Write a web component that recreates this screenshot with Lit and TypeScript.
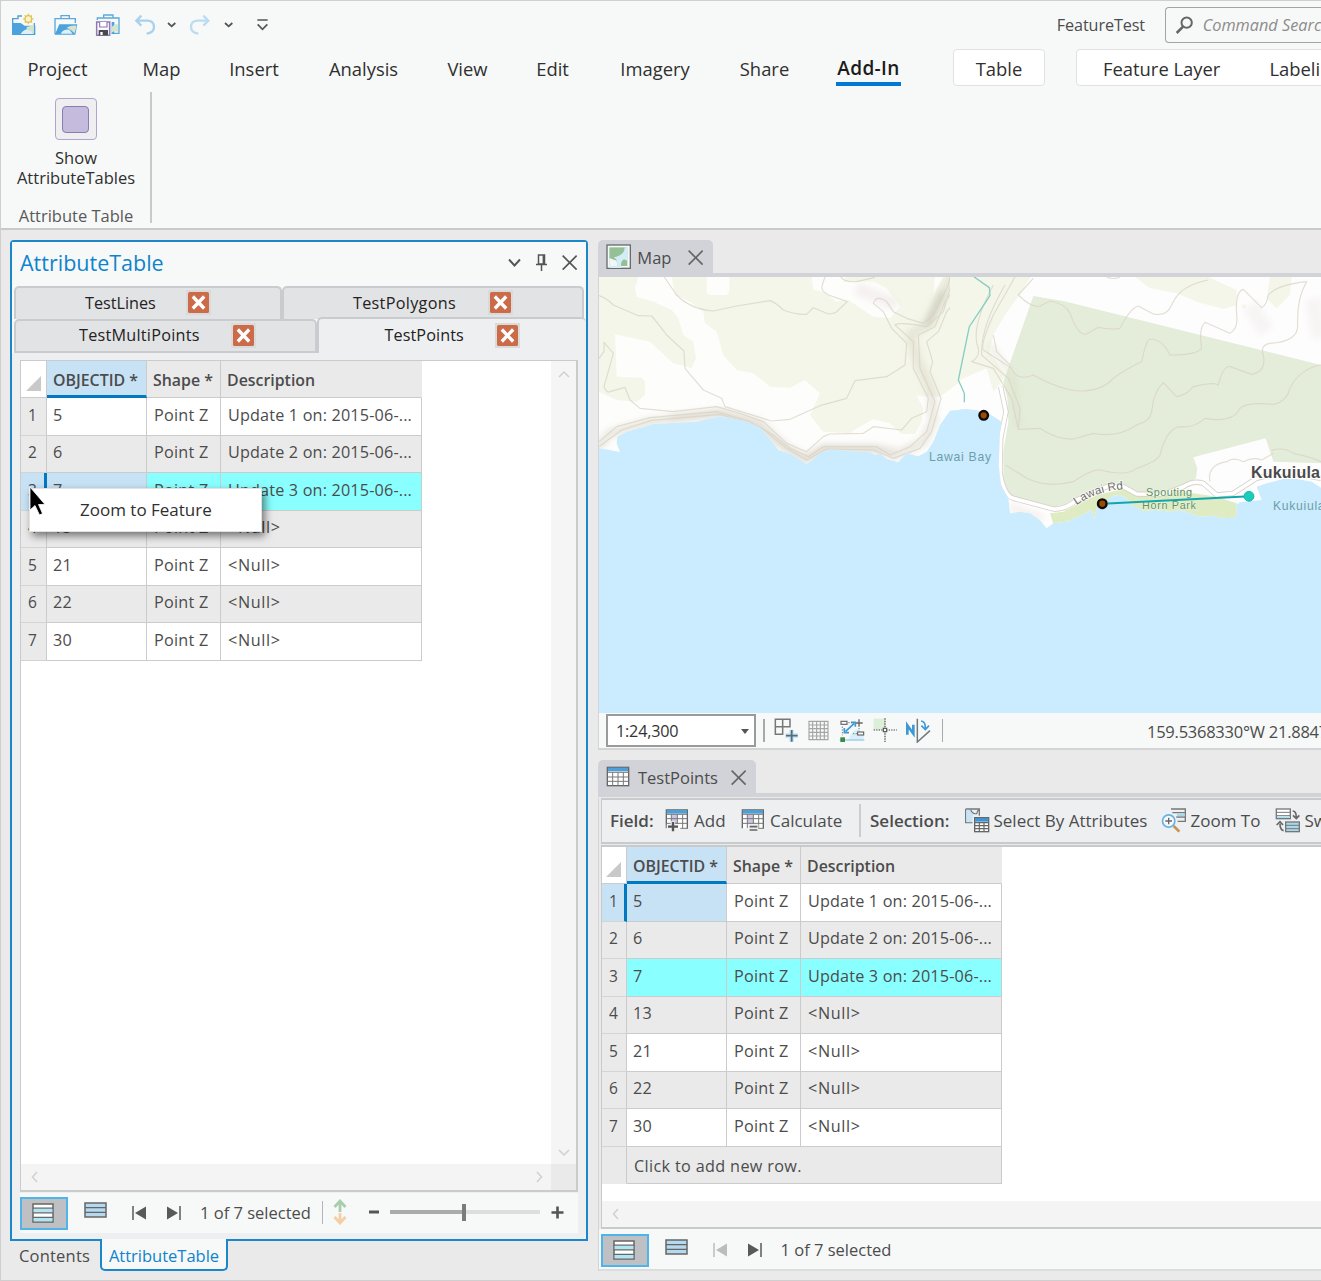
import { LitElement, html, svg, css, nothing } from "lit";
import { customElement, property } from "lit/decorators.js";

type Row = { id: string; text: string };

const ROWS: Row[] = [
  { id: "5", text: "Update 1 on: 2015-06-..." },
  { id: "6", text: "Update 2 on: 2015-06-..." },
  { id: "7", text: "Update 3 on: 2015-06-..." },
  { id: "13", text: "<Null>" },
  { id: "21", text: "<Null>" },
  { id: "22", text: "<Null>" },
  { id: "30", text: "<Null>" },
];

const MENU = ["Project", "Map", "Insert", "Analysis", "View", "Edit", "Imagery", "Share", "Add-In"];

/* Icons are drawn on a grid of three units per pixel. */
const icon = (x: number, y: number, w: number, h: number, body: unknown) =>
  html`<svg class="ico" width=${w / 3} height=${h / 3} viewBox="${x} ${y} ${w} ${h}">${body}</svg>`;

const newProject = icon(36, 36, 72, 72, svg`
  <path d="M38 66V53H54V45H66" fill="none" stroke="#4f9fd6" stroke-width="4"/>
  <path d="M36 66H62L74 74H106V102H36Z" fill="#4ba2dc"/>
  <path d="M103 66V100" stroke="#4ba2dc" stroke-width="4"/>
  <path d="M62 99Q72 82 92 84L101 99Z" fill="#dff0f8"/><path d="M80 78L102 72V98Q94 88 80 86Z" fill="#cfe3cf"/>
  <g stroke="#e3c14a" stroke-width="3.5"><path d="M85 38V70M69 54H101M74 43L96 65M96 43L74 65"/></g>
  <circle cx="85" cy="54" r="10" fill="#fbf3cf" stroke="#e3c14a" stroke-width="4"/>`);
const openProject = icon(162, 36, 74, 72, svg`
  <path d="M165 100V53H226V66M183 53V44H208V53" fill="none" stroke="#5ba9dc" stroke-width="4"/>
  <path d="M165 100L178 70H232L226 101H165Z" fill="#4ba2dc"/>
  <path d="M182 98Q190 84 208 86L218 98Z" fill="#dff0f8"/><path d="M200 80Q212 72 230 74L224 97Q214 86 200 80Z" fill="#d3e5d0"/>`);
const saveProject = icon(288, 36, 76, 76, svg`
  <path d="M295 60V54H360V100H338M314 54V45H342V54" fill="none" stroke="#5ba9dc" stroke-width="4"/>
  <path d="M338 66H346V102H338Z" fill="#4ba2dc"/><path d="M338 82Q350 68 357 74V96Q346 90 338 98Z" fill="#d3e5d0"/>
  <path d="M293 66H332V106H293Z" fill="#fbfbfd" stroke="#8f77b8" stroke-width="4.500"/><path d="M302 66V81H324V66" fill="#fff" stroke="#8f77b8" stroke-width="3.500"/>
  <rect x="299" y="90" width="28" height="16" fill="#4a4a4a"/><rect x="304" y="96" width="7" height="9" fill="#fff"/>`);
const undo = icon(406, 42, 66, 66, svg`<path d="M428 47L413 62L428 77M414 62H448Q466 64 466 81Q466 98 444 101" fill="none" stroke="#a9d1ec" stroke-width="7"/>`);
const redo = icon(571, 42, 66, 66, svg`<path d="M614 47L629 62L614 77M628 62H595Q577 64 577 81Q577 98 599 101" fill="none" stroke="#bcdcf0" stroke-width="7"/>`);
const caret = icon(508, 64, 28, 24, svg`<path d="M511 70L522 80L533 70" fill="none" stroke="#555" stroke-width="5.5"/>`);
const customize = icon(772, 56, 40, 44, svg`<path d="M776 62H807M777 75L791.5 90L806 75" fill="none" stroke="#555" stroke-width="5"/>`);
const search = icon(884, 48, 56, 58, svg`<circle cx="919" cy="71" r="15.500" fill="none" stroke="#666" stroke-width="6"/><path d="M908 83L889 102" stroke="#666" stroke-width="8"/>`);
const cross = (c = "#666", s = 46) => html`<svg class="ico" width=${s / 3} height=${s / 3} viewBox="0 0 46 46"><path d="M2 2L44 44M44 2L2 44" stroke=${c} stroke-width="5"/></svg>`;
const closeBox = html`<span class="close"><svg width="21" height="21" viewBox="0 0 21 21"><rect width="21" height="21" rx="1.500" fill="#cc6b48"/><path d="M4.800 4.500L16.200 16.500M16.200 4.500L4.800 16.500" stroke="#fff" stroke-width="3.300"/></svg></span>`;
const mapIcon = icon(48, 28, 76, 76, svg`<rect x="51" y="31" width="70" height="70" fill="#f6fafb" stroke="#6b6b6b" stroke-width="4"/><path d="M58 38H112V94H58Z" fill="#93c195"/><path d="M112 38H104Q104 54 92 60Q82 66 72 68L80 76L82 94H58V100H94Q90 80 102 74L112 78Z" fill="#d2edf8"/><path d="M58 70L80 78L82 94H58Z" fill="#f1f7f4"/>`);
const tableIcon = icon(48, 200, 72, 64, svg`<rect x="52" y="204" width="64" height="55" fill="#fff" stroke="#666" stroke-width="4"/><rect x="54" y="205" width="60" height="11" fill="#4e9fd8"/><path d="M52 219H116M52 233H116M52 246H116M68 219V259M84 219V259M100 219V259" stroke="#777" stroke-width="3"/>`);

const fieldTable = svg`<path d="M228 391V336H291V391" fill="#fff" stroke="#666" stroke-width="4"/><rect x="229" y="336" width="61" height="11" fill="#4e9fd8"/><rect x="244" y="350" width="17" height="26" fill="#cdc5e2"/><path d="M228 349H291M228 362H291M228 376H291M243 349V390M261 349V378M277 349V391M270 391H293" stroke="#777" stroke-width="3"/>`;
const addField = icon(224, 330, 72, 72, svg`${fieldTable}<path d="M229 386H265M247 370V402" stroke="#edeff1" stroke-width="13"/><path d="M233 386H263M248 372V400" stroke="#555" stroke-width="7"/>`);
const calcField = icon(224, 330, 72, 72, svg`${fieldTable}<rect x="246" y="378" width="30" height="24" fill="#edeff1"/><path d="M250 386H273M250 396H273" stroke="#666" stroke-width="5"/>`);
const selectAttr = icon(42, 324, 78, 78, svg`<path d="M47 330H88V352M47 330V371H68" fill="#e2f1fa" stroke="#777" stroke-width="4"/><path d="M49 332L65 334L70 350L66 370H49Z" fill="#c7e4f5"/><path d="M62 332Q68 346 80 344Q82 334 88 332" fill="none" stroke="#777" stroke-width="3.500"/><rect x="68" y="350" width="52" height="52" fill="#edeff1"/><rect x="74" y="356" width="42" height="42" fill="#fff" stroke="#666" stroke-width="4"/><rect x="75" y="357" width="40" height="11" fill="#3f93d1"/><path d="M74 371H116M74 380H116M74 389H116M88 370V398M102 370V398" stroke="#666" stroke-width="3.500"/>`);
const zoomTo = icon(632, 324, 78, 80, svg`<path d="M662 330H705V367H682M666 341H705M678 354H705" fill="none" stroke="#777" stroke-width="4"/><rect x="680" y="344" width="23" height="8" fill="#a8d8ea"/><circle cx="655" cy="366" r="18.500" fill="#f4f9fd" stroke="#6ab1e2" stroke-width="5"/><path d="M645 366H665M655 356V376" stroke="#666" stroke-width="4"/><path d="M670 381L687 398" stroke="#c69355" stroke-width="8"/>`);
const switchSel = icon(974, 324, 78, 80, svg`<rect x="978" y="330" width="42" height="29" fill="#fff" stroke="#777" stroke-width="4"/><path d="M978 340H1020M978 350H1020" stroke="#777" stroke-width="3"/><rect x="980" y="352" width="38" height="5" fill="#a8e0f0"/><rect x="1006" y="369" width="41" height="29" fill="#a8d8ea" stroke="#777" stroke-width="4"/><path d="M1006 379H1047M1006 389H1047" stroke="#777" stroke-width="3"/><path d="M1027 336Q1038 336 1038 356M1028 349L1038 359L1047 349M1000 395Q989 393 989 374M979 378L989 368L998 378" fill="none" stroke="#666" stroke-width="5"/>`);

const gridAdd = icon(552, 56, 76, 74, svg`<path d="M556 60H600V82H556ZM556 82V105H578V60M578 105V82" fill="none" stroke="#777" stroke-width="4.500"/><path d="M586 109H624M605 91V128" stroke="#c9e6f8" stroke-width="14"/><path d="M588 109H623M605 92V127" stroke="#5a6b78" stroke-width="5.500"/>`);
const gridIcon = icon(655, 60, 64, 64, svg`<path d="M658 64H715V119H658ZM658 75H715M658 86H715M658 97H715M658 108H715M669 64V119M681 64V119M692 64V119M704 64V119" fill="none" stroke="#a5a5a5" stroke-width="3.500"/>`);
const snapping = icon(748, 58, 80, 74, svg`<path d="M776 126Q784 98 802 92L822 104V126Z" fill="#d7effb"/><path d="M750 124H824" stroke="#9fcbe6" stroke-width="4"/><rect x="754" y="68" width="18" height="9" fill="#fff" stroke="#666" stroke-width="3.500"/><rect x="804" y="100" width="18" height="9" fill="#fff" stroke="#666" stroke-width="3.500"/><path d="M797 73H819M808 62V84" stroke="#666" stroke-width="4"/><path d="M768 98L793 75M764 88V102H778M784 71H797V84" fill="none" stroke="#3d98d6" stroke-width="5"/><path d="M776 72H790M758 84V110M808 88V98M790 105H802" stroke="#777" stroke-width="3" stroke-dasharray="4 4"/><rect x="752" y="116" width="14" height="14" fill="#3b8a45"/>`);
const dynCons = icon(848, 56, 74, 74, svg`<rect x="850" y="58" width="34" height="34" fill="#dcefd8"/><path d="M850 92H920M884 57V128" stroke="#444" stroke-width="3.500" stroke-dasharray="4 3.500"/><rect x="879" y="87" width="10" height="10" fill="#fff" stroke="#555" stroke-width="3.500"/>`);
const north = icon(946, 56, 80, 76, svg`<path d="M953 106V78L971 103V76" fill="none" stroke="#3d98d6" stroke-width="8"/><path d="M983 58V128L1021 94" fill="none" stroke="#777" stroke-width="4.500"/><path d="M994 65Q1008 66 1007 88M995 79L1007 91L1018 79" fill="none" stroke="#3d98d6" stroke-width="5"/>`);

const allRows = html`<svg class="ico" width="22" height="20" viewBox="0 0 22 20"><rect x="1" y="1" width="20" height="18" fill="#fff" stroke="#666" stroke-width="1.500"/><path d="M1.700 7.700H20.300M1.700 16.500H20.300" stroke="#aee6f6" stroke-width="3.400"/><path d="M1 5.200H21M1 9.800H21M1 14.300H21" stroke="#666" stroke-width="1.300"/></svg>`;
const selRows = html`<svg class="ico" width="23" height="16" viewBox="0 0 23 16"><rect x="1" y="1" width="21" height="14" fill="#b5d9ee" stroke="#666" stroke-width="1.500"/><path d="M1 5.700H22M1 10.300H22" stroke="#666" stroke-width="1.300"/></svg>`;
const toFirst = (c: string) => html`<svg class="ico" width="15" height="14" viewBox="0 0 15 14"><path d="M1 0V14" stroke=${c} stroke-width="1.500"/><path d="M14 .5V13.500L3 7Z" fill=${c}/></svg>`;
const toNext = html`<svg class="ico" width="15" height="14" viewBox="0 0 15 14"><path d="M14 0V14" stroke="#58595b" stroke-width="1.500"/><path d="M1 .5V13.500L12 7Z" fill="#58595b"/></svg>`;
const chevron = (d: string) => html`<svg class="ico" width="12" height="12" viewBox="0 0 12 12"><path d=${d} fill="none" stroke="#d0d0d0" stroke-width="1.500"/></svg>`;
const UP = "M1 8L6 3L11 8", DOWN = "M1 4L6 9L11 4", LEFT = "M8 1L3.500 6L8 11", RIGHT = "M4 1L8.500 6L4 11";

const base = css`
  * { box-sizing: border-box; }
  :host { display: block; font-family: "Open Sans", "Noto Sans", sans-serif; font-size: 16.500px; color: #4c4c4c; white-space: nowrap; }
  .ico { display: block; flex: none; }
`;

@customElement("data-grid")
export class DataGrid extends LitElement {
  @property({ type: Number }) current = 0;
  @property({ type: Boolean }) addRow = false;
  static styles = [base, css`
    .grid { display: grid; grid-template-columns: 26px 100px 74px 201px; width: 401px; font-size: 16.200px; letter-spacing: 0.250px; }
    .grid.slim { grid-template-columns: 25px 100px 74px 201px; width: 400px; }
    .h, .c { display: flex; align-items: center; border-right: 1px solid #cbcbcb; border-bottom: 1px solid #cbcbcb; padding-left: 7px; }
    .h { height: 37px; background: #eaeaea; font-weight: 600; font-size: 15.900px; padding: 1px 0 0 6px; letter-spacing: 0; }
    .h.last { border-right-color: #eaeaea; }
    .h.id { background: #c7e2f5; border-bottom: 3px solid #0079c1; padding-top: 3px; }
    .h.corner { background: #fff; align-items: flex-end; justify-content: flex-end; padding: 0 5px 6px 0; }
    .tri { width: 15px; height: 15px; background: #c9c9c9; clip-path: polygon(100% 0, 100% 100%, 0 100%); }
    .c { height: 37.500px; background: #fff; padding-bottom: 3px; }
    .c.i { padding-left: 6px; }
    .c.n { background: #eaeaea; padding-left: 7px; font-size: 15.500px; border-bottom-color: #d4d4d4; }
    .c.alt { background: #eaeaea; }
    .c.sel { background: #8affff; }
    .c.cur { background: #c7e2f5; }
    .c.mark { background: #c7e2f5; border-right: 3px solid #0079c1; }
    .c.add { grid-column: 2 / 5; padding: 2px 0 0 7px; letter-spacing: 0.350px; }
    .c.blank { border-bottom-color: #eaeaea; }
    .c.d { letter-spacing: 0.170px; }
    .c.null { letter-spacing: 0.650px; }
  `];
  render() {
    return html`<div class="grid ${this.addRow ? "slim" : ""}">
      <div class="h corner"><div class="tri"></div></div>
      <div class="h id">OBJECTID *</div><div class="h">Shape *</div><div class="h last">Description</div>
      ${ROWS.map((r, i) => {
        const tone = i === 2 ? "sel" : i % 2 ? "alt" : "";
        const here = i === this.current;
        return html`
          <div class="c n ${here ? "mark" : ""}">${i + 1}</div>
          <div class="c i ${here ? "cur" : tone}">${r.id}</div>
          <div class="c ${tone}">Point Z</div>
          <div class="c ${r.text === "<Null>" ? "null" : "d"} ${tone}">${r.text}</div>`;
      })}
      ${this.addRow ? html`<div class="c n blank"></div><div class="c alt add">Click to add new row.</div>` : nothing}
    </div>`;
  }
}

@customElement("grid-footer")
export class GridFooter extends LitElement {
  @property({ type: Boolean }) zoom = false;
  static styles = [base, css`
    .bar { display: flex; height: 33px; align-items: center; }
    .on { width: 48px; height: 33px; border: 2px solid #4fb4ea; background: #bfc0c4; display: grid; place-items: center; padding: 0 2px 1px 0; }
    .second { margin: -8px 0 0 16px; }
    .first { margin: -2px 0 0 25px; }
    .next { margin: -2px 0 0 19px; }
    .text { margin: -2px 0 0 19px; width: 112px; }
    .sep { width: 1px; height: 23px; background: #b5b5b5; margin: -3px 10px 0; }
    .arrows, .minus, .plus { margin-top: -3px; }
    .slider { display: flex; align-items: center; width: 150px; margin: -3px 11px 0 11px; }
    .done { width: 72px; height: 4px; background: #ababab; }
    .thumb { width: 4px; height: 17px; background: #7b7b7b; }
    .rest { flex: 1; height: 4px; background: #dedede; }
  `];
  render() {
    return html`<div class="bar">
      <div class="on">${allRows}</div><div class="second">${selRows}</div>
      <div class="first">${toFirst(this.zoom ? "#58595b" : "#bbbcbe")}</div><div class="next">${toNext}</div>
      <div class="text">1 of 7 selected</div>
      ${this.zoom ? html`<div class="sep"></div>
        <svg class="ico arrows" width="14" height="26" viewBox="0 0 14 26"><path d="M7 13V3M1.500 8L7 2L12.500 8" fill="none" stroke="#a9ceae" stroke-width="2.800"/><path d="M7 14V23M1.500 18L7 24L12.500 18" fill="none" stroke="#f3cfa5" stroke-width="2.800"/></svg>
        <svg class="ico minus" width="32" height="12" viewBox="0 0 32 12"><path d="M22 6H32" stroke="#555" stroke-width="3"/></svg>
        <div class="slider"><div class="done"></div><div class="thumb"></div><div class="rest"></div></div>
        <svg class="ico plus" width="13" height="13" viewBox="0 0 13 13"><path d="M0.500 6.500H12.500M6.500 .5V12.500" stroke="#555" stroke-width="2.600"/></svg>` : nothing}
    </div>`;
  }
}

@customElement("map-view")
export class MapView extends LitElement {
  static styles = css`
    :host { display: block; }
    svg { display: block; }
    text { font-family: "Liberation Sans", Arial, sans-serif; }
    .contour { fill: none; stroke: #d8d2c4; stroke-width: 3.500; stroke-linejoin: round; opacity: 0.7; }
    .veg { fill: #f3f6e8; }
  `;
  render() {
    return html`<svg width="722" height="436" viewBox="599 277 722 436">
      <defs>
        <filter id="soft" filterUnits="userSpaceOnUse" x="-50" y="0" width="1300" height="850"><feGaussianBlur stdDeviation="9"/></filter>
        <clipPath id="west"><path d="M27 100V640L60 645L90 652L80 625L82 605L110 590L190 567L260 563L320 560L350 552L385 545L420 548L470 560L510 577L530 600L565 645L605 658L650 687L670 672L690 655L720 643L780 648L840 652L855 660L870 655L890 672L925 682L950 655L985 664L1010 650L1030 620L1050 570L1080 527L1110 524V100Z"/></clipPath>
        <clipPath id="east"><path d="M0 30V434L50 432L80 436L115 445L155 470L150 500L146 600L153 660L175 700L180 745L210 740L240 745L270 765L290 790L310 775L350 770L400 748L425 735L432 762L440 730L460 722L470 705L490 692L510 690L530 700L545 720L580 738L620 735L660 740L690 735L720 745L750 755L790 752L820 760L850 758L862 745L858 720L870 712L935 705L920 665L950 655L1000 642L1040 642L1085 650L1113 668V30Z"/></clipPath>
        <path id="rd" d="M380 721Q440 677 530 672"/>
      </defs>
      <rect x="599" y="277" width="722" height="436" fill="#cbebff"/>
      <g transform="translate(590 235) scale(.33333)"><g clip-path="url(#west)">
        <rect x="20" y="100" width="1100" height="600" fill="#fdfdfc"/>
        <path class="veg" d="M27 125H145L135 160L140 185L190 200L245 225L265 250L280 300L310 320L318 370L305 400L250 385L180 320L75 298L80 425L155 428L165 440V480L140 500L80 495L27 470Z"/>
        <path class="veg" d="M245 125H350V175L360 180L410 180L418 170V125H665L670 165L700 170L740 200L775 195L850 245L900 250L930 215L890 160L850 140L760 140L770 125H1035L1030 180L1060 125H1110V440L1050 485L980 483L1000 520L995 560L975 597L935 597L900 565L850 553L800 580L780 595L700 590L660 540L690 475L645 435L600 458L540 455L490 415L440 405L400 360L380 290L345 265L340 230L300 200L255 180Z"/>
        <g fill="none" filter="url(#soft)">
          <path d="M1090 120L1050 190L1015 265L960 300L985 380L1025 470L1030 560L1000 620L930 655L860 640L700 640L650 675L590 640L510 565L385 535L180 560L60 595L20 640" stroke="#ddd8cb" stroke-width="26" opacity=".6"/>
          <path d="M1060 170L1010 272" stroke="#c3c2ae" stroke-width="22" opacity=".55"/>
          <path d="M240 548L400 532L500 568L560 625L650 668L700 640L860 645L920 672" stroke="#b5aa98" stroke-width="9" opacity=".4"/>
          <path d="M800 160L920 210" stroke="#f4f0ef" stroke-width="36"/>
        </g>
        <g class="contour">
          <path d="M222 125L260 180Q300 222 370 228L440 213L540 197Q560 205 580 225Q620 240 650 238L670 218L715 237Q740 235 745 225L772 200L715 180Q690 165 697 150L705 125M752 125Q760 142 800 140L855 127"/>
          <path d="M27 182Q50 190 70 210L145 242L185 243Q200 260 230 300L282 348L285 400L340 465L395 490L405 515L470 535L545 558L600 553L690 512L770 490L795 437L890 425L945 390L950 325L905 280L880 230L850 205Q860 178 890 200L910 230L950 250L1000 265L1030 240L1075 150L1080 125"/>
          <path d="M27 370L42 350V322L70 355L42 455Q50 475 60 470L105 457L120 495L150 520L250 530L380 515L450 535L520 560L590 625L650 650L700 605L720 597L820 595L850 575L935 585L965 550L1010 530L1015 490L970 400V320L915 270Q930 260 1010 275L1060 230L1090 125"/>
          <path d="M27 620L80 575L180 548L380 530L480 560L550 600L600 640L655 665L700 635L860 635L900 660L960 635L1010 590L1035 500L990 400L985 300L1035 275L1065 200L1110 140"/>
          <path d="M27 635L95 585L185 556L390 538L510 575L590 640L650 675L710 642L850 645L910 670L990 640L1025 590L1053 490L1020 410L1028 380L1010 320L1045 290L1070 230L1105 190"/>
        </g>
      </g></g>
      <g transform="translate(950 265) scale(.33333)"><g clip-path="url(#east)">
        <rect x="30" y="30" width="1100" height="770" fill="#fefdfd"/>
        <path class="veg" d="M-5 30H245L215 80L165 150L130 210L118 260L165 330L155 350L130 380L110 310L-5 360ZM555 36H775L860 75V120L820 132L740 110L680 85L600 70ZM960 36H1025L1020 90L980 130L950 100ZM876 118L890 120L886 132L876 128Z"/>
        <path d="M1090 100L1110 220M900 120L950 200" fill="none" stroke="#f7f4f4" stroke-width="50" filter="url(#soft)"/>
        <path d="M250 93L340 108L1113 300V595L970 590L947 520L730 577L742 610L738 640L690 668L570 690L520 670L470 660L400 690L330 730L220 715L175 690L160 640V560L175 470L172 400L160 350Z" fill="#e4edda"/>
        <path d="M300 745L340 740L400 708L440 690L520 672L570 690L640 690L700 680L800 695L860 715L865 770H720L500 720L440 765L400 760L310 778Z" fill="#dfebc2"/>
        <path d="M120 240L190 345L205 480" stroke="#d3d6bd" stroke-width="16" fill="none" opacity=".4" filter="url(#soft)"/>
        <path d="M180 725L280 760" stroke="#efe9e3" stroke-width="14" filter="url(#soft)"/>
        <g class="contour">
          <path d="M250 40L205 90Q245 130 270 123L300 108Q345 115 360 145Q385 215 410 207L445 187Q490 195 510 190Q540 130 565 123L610 147Q650 155 665 120Q690 60 775 45M470 36Q490 45 510 36"/>
          <path d="M195 36L130 150Q90 240 100 255L185 310Q200 350 250 330Q340 380 400 378Q460 375 490 340Q530 310 575 290Q590 220 600 223Q635 220 660 270Q740 270 755 250Q745 190 765 172L840 205Q865 190 860 150Q855 80 880 73L935 128Q950 120 955 90Q980 60 1070 50"/>
          <path d="M165 60Q90 190 95 270L175 340L210 430L205 493L270 490Q320 525 370 522L430 505Q500 520 560 480Q600 470 605 440Q610 380 640 353L680 395Q710 390 730 365Q790 350 805 360Q820 300 840 305L905 328Q950 320 940 270Q930 240 960 235Q1045 230 1043 180Q1040 100 1070 50"/>
          <path d="M130 60Q60 190 85 250Q90 275 65 290L130 310L185 400L205 493M167 600L230 640Q290 670 370 650Q430 610 450 615Q530 635 560 610Q620 590 630 570Q650 490 690 485Q730 490 765 460Q850 475 870 430Q890 410 970 418Q1010 410 1020 370Q1050 310 1113 300"/>
          <path d="M965 556Q1000 545 1030 565Q1080 575 1113 590M780 650Q770 600 830 590Q850 575 880 590Q910 575 935 585L970 565M130 210L140 260L180 300"/>
        </g>
        <g fill="none" stroke-linejoin="round">
          <path d="M152 365L168 440L152 520L150 620Q160 690 190 700L310 732Q345 735 380 705L470 665L520 665L560 687L640 688L700 665Q730 645 760 655L800 690L850 685L920 640L1000 620L1113 640" stroke="#d6d1ca" stroke-width="16"/>
          <path d="M152 365L168 440L152 520L150 620Q160 690 190 700L310 732Q345 735 380 705L470 665L520 665L560 687L640 688L700 665Q730 645 760 655L800 690L850 685L920 640L1000 620L1113 640" stroke="#fff" stroke-width="11"/>
        </g>
        <path d="M70 34L118 68L120 92L58 185L25 345L43 385V412" fill="none" stroke="#86cdc3" stroke-width="4"/>
      </g></g>
      <g font-size="12.200" fill="#6b9fa8"><text x="929" y="461" textLength="62">Lawai Bay</text><text x="1273" y="510" letter-spacing=".7">Kukuiula Bay</text></g>
      <g transform="translate(950 265) scale(.33333)"><text font-size="35" fill="#6d6b66" stroke="#fff" stroke-width="4" paint-order="stroke"><textPath href="#rd" textLength="150">Lawai Rd</textPath></text></g>
      <g font-size="10.800" fill="#5f9168" stroke="#eef5e0" stroke-width="1" paint-order="stroke"><text x="1146" y="495.500" textLength="46">Spouting</text><text x="1142" y="509" textLength="54">Horn Park</text></g>
      <text x="1251" y="477.500" font-size="16" font-weight="700" letter-spacing=".2" fill="#4b4b4b" stroke="#fff" stroke-width="2" paint-order="stroke">Kukuiula</text>
      <path d="M1108 503.500L1245 496.500" stroke="#12a6ac" stroke-width="1.900"/>
      <g fill="#9d4a00" stroke="#0b0b0b" stroke-width="2.400"><circle cx="983.700" cy="415.300" r="4.300"/><circle cx="1102.300" cy="503.700" r="4.300"/></g>
      <circle cx="1249" cy="496.300" r="4.900" fill="#19cdbd" stroke="#18b5b0"/>
    </svg>`;
  }
}

@customElement("app-root")
export class AppRoot extends LitElement {
  static styles = [base, css`
    .app { position: relative; width: 1321px; height: 1281px; overflow: hidden; background: #eaeaea; border: solid #cfcfcf; border-width: 1px 0 1px 1px; display: flex; flex-direction: column; }
    .ribbon { height: 229px; flex: none; background: #f7f9f8; border-bottom: 2px solid #c9c9cd; color: #2f2f2f; }
    .qat { display: flex; align-items: center; height: 48px; padding-left: 11px; }
    .open { margin-left: 18px; } .save { margin-left: 16.500px; } .undo { margin-left: 14px; }
    .c1 { margin-left: 11px; } .redo { margin-left: 12px; } .c2 { margin-left: 13px; } .cust { margin-left: 23px; }
    .name { margin-left: auto; margin-right: 20px; color: #4c4c4c; font-size: 16.200px; letter-spacing: -0.100px; }
    .search { width: 156px; height: 36px; border: 1.500px solid #a3a3a3; border-right: 0; border-radius: 4px 0 0 4px; display: flex; align-items: center; gap: 9px; padding-left: 9px; font-style: italic; color: #8c8c8c; overflow: hidden; font-size: 16.300px; }
    .menu { display: grid; grid-template-columns: 109px 99px 86px 133px 75px 95px 110px 109px 99px 35px 92px 31px 300px; height: 37px; margin-left: 2px; font-size: 18.400px; align-items: stretch; }
    .menu > div { display: flex; align-items: center; justify-content: center; padding-top: 1px; }
    .menu .active { font-weight: 600; color: #1c1c1c; font-size: 19px; letter-spacing: 0.400px; padding: 0; }
    .active span { display: flex; align-items: center; height: 37px; border-bottom: 4px solid #0079d6; padding: 5px 1px 0; }
    .menu .pill { background: #fff; border: 1px solid #e0e1e1; border-radius: 4px; }
    .menu .wide { justify-content: flex-start; padding-left: 26px; gap: 49px; }
    .group { width: 151px; height: 131px; margin-top: 6px; border-right: 2px solid #c9c9c9; display: flex; flex-direction: column; align-items: center; padding-top: 6px; }
    .tile { width: 42px; height: 42px; flex: none; border: 1.500px solid #b1a5cf; border-radius: 4px; background: #efeff0; display: grid; place-items: center; }
    .tile i { width: 27px; height: 27px; border: 1.500px solid #8a7db5; border-radius: 4px; background: #c4bbdd; display: block; }
    .cmd { line-height: 19.500px; text-align: center; margin-top: 8px; padding-left: 1px; }
    .gname { margin-top: 17px; color: #595959; line-height: 24px; padding-left: 1px; }
    .main { display: flex; flex: 1; padding: 10px 0 0 9px; }
    .left { width: 578px; flex: none; }
    .pane { height: 1001px; border: 2px solid #1b86c9; border-radius: 4px 4px 0 0; background: #eeeff1; display: flex; flex-direction: column; }
    .title { height: 44px; display: flex; align-items: center; padding: 0 9px 3px 8px; background: #f7f9f8; color: #0f83cd; font-size: 21.500px; }
    .title .t { flex: 1; }
    .acts { display: flex; align-items: center; gap: 14px; }
    .tabs { height: 67px; background: #f7f9f8; display: flex; flex-direction: column; }
    .trow { display: flex; height: 33px; padding-left: 2px; }
    .tab { height: 33px; background: #e2e3e5; border: 2px solid #cacbcf; border-bottom: 0; border-radius: 5px 5px 0 0; display: flex; align-items: center; color: #222; font-size: 16.200px; padding-bottom: 2px !important; }
    .close { margin-left: auto; border: 2px solid #dadada; display: block; height: 25px; }
    .close svg { display: block; }
    .a { width: 268px; padding: 0 69px 0 69px; } .b { width: 302px; padding: 0 69px 0 69px; letter-spacing: 0.300px; }
    .m { width: 304px; padding: 0 59px 0 63px; letter-spacing: 0.250px; } .p { width: 269px; height: 36px; margin-top: -2px; padding: 0 66px 0 65px; background: #eeeff1; border-right: 0; letter-spacing: 0.100px; }
    .trow.two { height: 34px; } .trow.two .m { height: 34px; border-bottom: 2px solid #cacbcf; }
    .box { width: 558px; height: 832px; margin: 7px 0 0 8px; border: 2px solid #cbcbcb; border-width: 1px 2px 2px 1px; background: #fff; display: grid; grid-template: 1fr 26px / 1fr 25px; }
    .v { background: #f5f5f5; display: flex; flex-direction: column; justify-content: space-between; align-items: center; padding: 8px 0 6px; }
    .hz { background: #f4f4f4; display: flex; justify-content: space-between; align-items: center; padding: 0 6px 0 8px; }
    .corner { background: #eaeaea; }
    .foot { margin: 1px 0 0 8px; width: 558px; padding: 4px 0 0; height: 40px; background: #f7f9f8; }
    .dock { display: flex; margin-top: -2px; height: 33px; position: relative; }
    .dock .off { width: 90px; padding: 5px 0 0 9px; letter-spacing: 0.200px; }
    .dock .on { width: 128px; height: 32px; border: 2px solid #1b86c9; border-top: 0; border-radius: 0 0 5px 5px; background: #f7f9f8; color: #0f83cd; display: grid; place-items: center; padding-top: 3px; }
    .right { flex: 1; margin-left: 10px; }
    .vtab { height: 33px; border-radius: 5px 5px 0 0; background: #d2d3d8; display: flex; align-items: center; padding-left: 8px; }
    .vtab.map { width: 115px; } .vtab.tbl { width: 158px; margin-top: 10px; }
    .vtab .lbl { padding: 2px 0 0 6px; flex: 1; }
    .vtab.tbl .lbl { padding-left: 8px; }
    .vtab .x { padding: 3px 10px 0 0; }
    .strip { height: 4px; background: #d2d3d8; }
    .body { border-left: 1px solid #d3d4d6; }
    .mapbar { height: 37px; background: #f7f9f8; border: 1px solid #d3d4d6; border-width: 0 0 2px 1px; display: flex; align-items: center; padding-left: 7px; overflow: hidden; }
    .scale { width: 150px; height: 33px; flex: none; border: 2px solid #9a9a9a; background: #fff; display: flex; align-items: center; justify-content: space-between; padding: 1px 5px 0 8px; color: #333; font-size: 16.200px; letter-spacing: -0.200px; }
    .arr { border: 4px solid transparent; border-top: 5px solid #555; border-bottom: 0; }
    .vs { width: 1.500px; height: 23px; background: #a9a9a9; flex: none; }
    .mapicons { display: flex; align-items: center; flex: none; padding: 0 9.500px; }
    .s1 { margin-left: 9px; } .s2 { margin-left: 9.700px; } .s3 { margin-left: 6.700px; } .s4 { margin-left: 8px; }
    .mapbar .first { margin-left: 7px; }
    .mapbar .coord { margin: 2px 0 0 204px; letter-spacing: -0.250px; }
    .tools { height: 46px; margin: 1px 0 0 2px; border: 1px solid #c9cacc; border-width: 2px 0 2px 1px; background: #eeeff1; display: grid; grid-template-columns: 54.500px 29.500px 47px 29px 89px 11px 94px 29.500px 167.500px 29.500px 84px 30px 100px; align-items: center; padding: 0 0 2px 8px; font-size: 17px; overflow: hidden; }
    .tools b { font-weight: 600; font-size: 17px; }
    .tools .vs { background: #cccdcf; height: 33px; }
    .sheet { height: 384px; margin: 1px 0 0 2px; border: 1px solid #c9cacc; border-width: 2px 0 2px 1px; background: #fff; display: flex; flex-direction: column; justify-content: space-between; }
    .sheet .hz { height: 26px; padding-left: 8px; }
    .low { background: #f7f9f8; height: 42px; padding: 4px 0 0 1.500px; border-bottom: 2px solid #dcdddf; }
    .low grid-footer { padding-top: 1px; }
    .popup { position: absolute; left: 28px; top: 487px; width: 233px; height: 44px; background: #fff; border: 1px solid #e1e1e1; box-shadow: 3px 4px 8px rgba(0,0,0,.5); display: flex; align-items: center; padding: 0 0 2px 50px; font-size: 17px; color: #2f2f2f; }
    .cursor { position: absolute; left: 28px; top: 485px; }
  `];
  render() {
    return html`<div class="app">
      <header class="ribbon">
        <div class="qat">
          <div>${newProject}</div><div class="open">${openProject}</div><div class="save">${saveProject}</div>
          <div class="undo">${undo}</div><div class="c1">${caret}</div><div class="redo">${redo}</div><div class="c2">${caret}</div><div class="cust">${customize}</div>
          <div class="name">FeatureTest</div>
          <div class="search">${search}<span>Command Search</span></div>
        </div>
        <nav class="menu">
          ${MENU.map((m) => html`<div class=${m === "Add-In" ? "active" : ""}><span>${m}</span></div>`)}
          <div></div><div class="pill">Table</div><div></div><div class="pill wide"><span>Feature Layer</span><span>Labeling</span></div>
        </nav>
        <div class="group">
          <div class="tile"><i></i></div>
          <div class="cmd">Show<br>AttributeTables</div>
          <div class="gname">Attribute Table</div>
        </div>
      </header>
      <main class="main">
        <section class="left">
          <div class="pane">
            <div class="title"><span class="t">AttributeTable</span>
              <span class="acts">
                <svg class="ico" width="13" height="9" viewBox="0 0 13 9"><path d="M1 1.500L6.500 7.500L12 1.500" fill="none" stroke="#555" stroke-width="1.900"/></svg>
                <svg class="ico" width="13" height="17" viewBox="0 0 13 17"><path d="M3.500 1H9.500V10H3.500ZM1 10.500H12M6.500 10.500V17" fill="none" stroke="#555" stroke-width="1.500"/><path d="M8.600 1V10" stroke="#555" stroke-width="2"/></svg>
                ${cross("#555")}
              </span>
            </div>
            <div class="tabs">
              <div class="trow"><div class="tab a">TestLines ${closeBox}</div><div class="tab b">TestPolygons ${closeBox}</div></div>
              <div class="trow two"><div class="tab m">TestMultiPoints ${closeBox}</div><div class="tab p">TestPoints ${closeBox}</div></div>
            </div>
            <div class="box">
              <data-grid .current=${2}></data-grid>
              <div class="v">${chevron(UP)}${chevron(DOWN)}</div>
              <div class="hz">${chevron(LEFT)}${chevron(RIGHT)}</div><div class="corner"></div>
            </div>
            <div class="foot"><grid-footer .zoom=${true}></grid-footer></div>
          </div>
          <div class="dock"><div class="off">Contents</div><div class="on">AttributeTable</div></div>
        </section>
        <section class="right">
          <div class="vtab map">${mapIcon}<span class="lbl">Map</span><span class="x">${cross()}</span></div>
          <div class="strip"></div>
          <div class="body"><map-view></map-view></div>
          <div class="mapbar">
            <div class="scale">1:24,300<span class="arr"></span></div>
            <div class="vs first"></div>
            <div class="mapicons"><div>${gridAdd}</div><div class="s1">${gridIcon}</div><div class="s2">${snapping}</div><div class="s3">${dynCons}</div><div class="s4">${north}</div></div>
            <div class="vs"></div>
            <span class="coord">159.5368330°W 21.8847</span>
          </div>
          <div class="vtab tbl">${tableIcon}<span class="lbl">TestPoints</span><span class="x">${cross()}</span></div>
          <div class="strip"></div>
          <div class="body">
            <div class="tools">
              <b>Field:</b>${addField}<span>Add</span>${calcField}<span>Calculate</span><i class="vs"></i><b>Selection:</b>
              ${selectAttr}<span>Select By Attributes</span>${zoomTo}<span>Zoom To</span>${switchSel}<span>Switch</span>
            </div>
            <div class="sheet"><data-grid .current=${0} .addRow=${true}></data-grid><div class="hz">${chevron(LEFT)}</div></div>
            <div class="low"><grid-footer></grid-footer></div>
          </div>
        </section>
      </main>
      <div class="popup">Zoom to Feature</div>
      <svg class="cursor" width="18" height="32" viewBox="0 0 18 32"><path d="M1 1V24L6 19.500L10.500 29L13.500 27.500L9.500 18.500H16Z" fill="#000" stroke="#fff" stroke-width=".8"/></svg>
    </div>`;
  }
}
